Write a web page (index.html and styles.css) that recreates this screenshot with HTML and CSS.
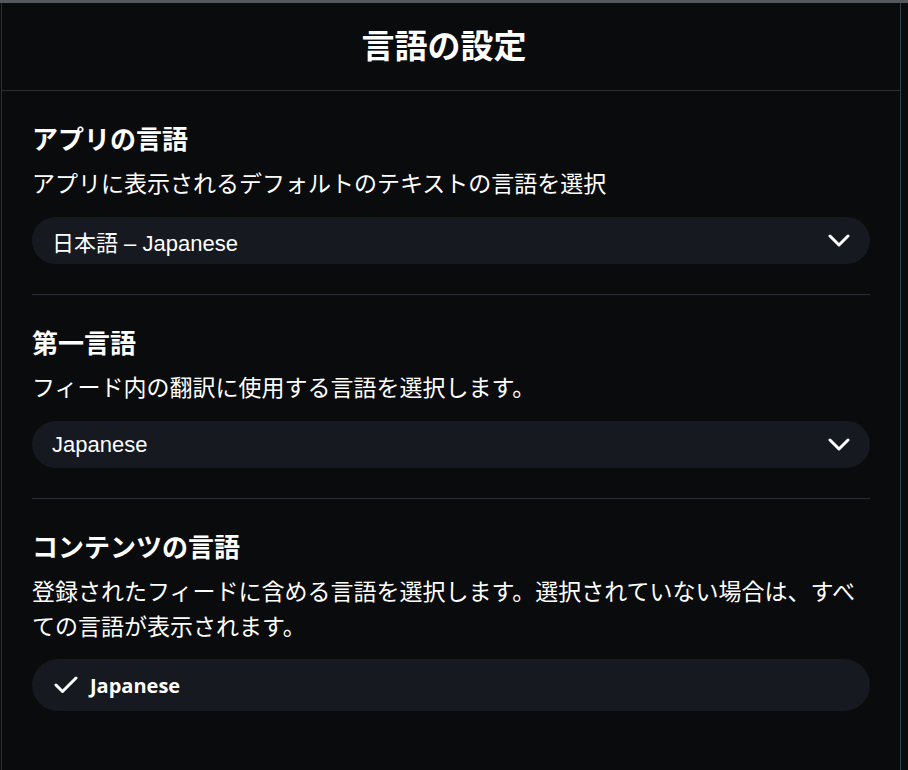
FILE: index.html
```html
<!DOCTYPE html>
<html lang="ja">
<head>
    <meta charset="UTF-8">
    <meta name="viewport" content="width=device-width, initial-scale=1.0">
    <title>言語の設定</title>
    <link rel="stylesheet" href="styles.css">
</head>
<body>

    <div class="topbar"></div>

    <div class="panel">
        <div class="header">
            <h1>言語の設定</h1>
        </div>

        <div class="section">
            <h2>アプリの言語</h2>
            <p class="desc">アプリに表示されるデフォルトのテキストの言語を選択</p>
            <div class="select">
                <span>日本語 – Japanese</span>
                <svg class="chevron" width="22" height="14" viewBox="0 0 22 14">
                    <path d="M2 2 L11 11 L20 2" fill="none" stroke="#fff" stroke-width="3" stroke-linecap="round" stroke-linejoin="round"/>
                </svg>
            </div>
        </div>

        <div class="section">
            <h2>第一言語</h2>
            <p class="desc">フィード内の翻訳に使用する言語を選択します。</p>
            <div class="select">
                <span>Japanese</span>
                <svg class="chevron" width="22" height="14" viewBox="0 0 22 14">
                    <path d="M2 2 L11 11 L20 2" fill="none" stroke="#fff" stroke-width="3" stroke-linecap="round" stroke-linejoin="round"/>
                </svg>
            </div>
        </div>

        <div class="section last">
            <h2>コンテンツの言語</h2>
            <p class="desc">登録されたフィードに含める言語を選択します。選択されていない場合は、すべての言語が表示されます。</p>
            <div class="chip">
                <svg class="check" width="24" height="18" viewBox="0 0 24 18">
                    <path d="M2 9 L8.5 15.5 L22 2" fill="none" stroke="#fff" stroke-width="3" stroke-linecap="round" stroke-linejoin="round"/>
                </svg>
                <span>Japanese</span>
            </div>
        </div>
    </div>

</body>
</html>
```

FILE: styles.css
```css
body {
    margin: 0;
    padding: 0 0 0 1px;
    background: #0a0b0d;
    color: #fff;
    font-family: "Noto Sans CJK JP", sans-serif;
}
.topbar {
    height: 3px;
    margin-left: -1px;
    background: #55585c;
}
.panel {
    width: 898px;
    min-height: 767px;
    border-left: 1px solid #2b2f34;
    border-right: 1px solid #34404a;
}
.header {
    height: 88px;
    border-bottom: 1px solid #2b3036;
    display: flex;
    align-items: center;
    justify-content: center;
    padding-right: 14px;
    box-sizing: border-box;
}
h1 {
    margin: 0 0 6px;
    font-size: 33px;
    font-weight: 700;
    line-height: 40px;
}
.section {
    margin: 0 30px 0 30px;
    padding: 30px 0 30px;
    border-bottom: 1px solid #2b3036;
}
.section.last {
    border-bottom: none;
}
h2 {
    margin: 0;
    font-size: 26px;
    font-weight: 700;
    line-height: 34px;
}
.desc {
    margin: 10px 0 17px;
    font-size: 23px;
    line-height: 35px;
}
.last .desc {
    margin-bottom: 16px;
}
.select {
    height: 47px;
    border-radius: 24px;
    background: #161920;
    display: flex;
    align-items: center;
    justify-content: space-between;
    padding: 0 20px 0 20px;
    font-family: "Liberation Sans", "Noto Sans CJK JP", sans-serif;
    font-size: 22px;
}
.chevron {
    display: block;
}
.chip {
    height: 52px;
    border-radius: 26px;
    background: #161920;
    display: flex;
    align-items: center;
    gap: 12px;
    padding: 0 22px;
    font-family: "Open Sans", sans-serif;
    font-weight: 700;
    font-size: 20px;
}
.check {
    display: block;
}
```
